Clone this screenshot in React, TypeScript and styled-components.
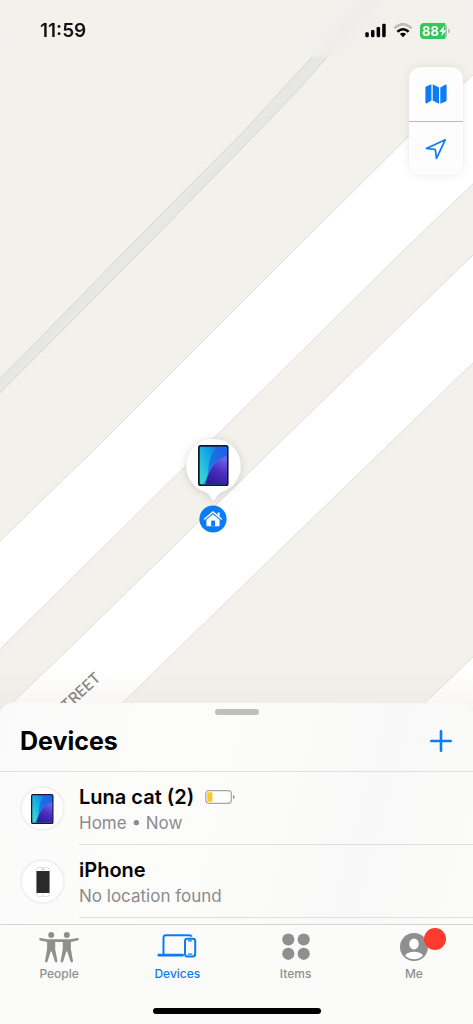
import React from "react";
import styled, { createGlobalStyle } from "styled-components";

const blue = "#0a7cf6";
const grey = "#8f8f90";

const GlobalStyle = createGlobalStyle`
  * { box-sizing: border-box; }
  body { margin: 0; background: #f2f1ec; font-family: Inter, "Liberation Sans", sans-serif; }
  button { font: inherit; color: inherit; background: none; border: 0; padding: 0; cursor: pointer; }
  svg { display: block; }
`;

const Screen = styled.div`
  min-height: 100vh;
  display: flex;
  flex-direction: column;
`;

const MapArea = styled.main`
  position: relative;
  flex: 1;
  min-height: 400px;
  overflow: hidden;
  background: #f2f1ec;
`;

const MapDrawing = styled.svg`
  position: absolute;
  inset: 0;
  width: 100%;
  height: 100%;
`;

const StatusBar = styled.header`
  position: relative;
  display: flex;
  align-items: center;
  justify-content: space-between;
  height: 57px;
  padding: 4px 23px 0 40px;
  background: rgba(242, 241, 236, 0.55);
  backdrop-filter: blur(10px);
`;

const Time = styled.time`
  font-size: 19px;
  font-weight: 600;
  color: #111;
`;

const StatusIcons = styled.div`
  display: flex;
  align-items: center;
  gap: 7px;
`;

const Controls = styled.div`
  position: relative;
  display: flex;
  flex-direction: column;
  width: 54px;
  margin: 10px 10px 0 auto;
  border-radius: 12px;
  background: #fdfdfd;
  box-shadow: 0 0 8px rgba(0, 0, 0, 0.09);
`;

const ControlButton = styled.button`
  display: grid;
  place-items: center;
  height: 54px;
  & + & { border-top: 1px solid #b9b9b9; }
`;

const Marker = styled.div`
  position: absolute;
  top: 65%;
  left: 45%;
  transform: translate(-50%, -27px);
`;

const HomePin = styled.div`
  position: absolute;
  top: 65%;
  left: 45%;
  transform: translate(-50%, 40px);
`;

const Sheet = styled.section`
  position: relative;
  margin-top: -12px;
  border-radius: 12px 12px 0 0;
  background: linear-gradient(105deg, #fafafa 0%, #fcfcfb 35%, #fbfbfa 55%, #f8f8f8 75%, #fbfbfa 100%);
`;

const Handle = styled.div`
  width: 44px;
  height: 6px;
  margin: 0 auto;
  border-radius: 3px;
  background: #bfbfbf;
`;

const SheetTop = styled.div`
  padding-top: 6px;
  height: 69px;
  border-bottom: 1px solid #e1e1e1;
`;

const SheetHeader = styled.div`
  display: flex;
  align-items: center;
  justify-content: space-between;
  height: 52px;
  padding: 0 21px 0 20px;
`;

const Title = styled.h1`
  margin: 0;
  font-size: 25px;
  line-height: 32px;
  font-weight: 700;
  color: #000;
`;

const DeviceList = styled.ul`
  list-style: none;
  margin: 0;
  padding: 0 0 6px 20px;
`;

const DeviceRow = styled.li`
  display: flex;
  align-items: center;
  gap: 14px;
`;

const Avatar = styled.div`
  display: grid;
  place-items: center;
  flex: none;
  width: 45px;
  height: 45px;
  border: 2px solid #f1f1f3;
  border-radius: 50%;
  background: #fff;
`;

const DeviceText = styled.div`
  flex: 1;
  height: 73px;
  padding-top: 12px;
  border-bottom: 1px solid #dfdfdf;
`;

const DeviceName = styled.h2`
  display: flex;
  align-items: center;
  gap: 11px;
  margin: 0;
  font-size: 20px;
  line-height: 26px;
  font-weight: 600;
  color: #050505;
`;

const DeviceStatus = styled.p`
  margin: 0;
  font-size: 17px;
  line-height: 26px;
  color: #8b8b8e;
`;

const TabBar = styled.nav`
  position: relative;
  height: 100px;
  border-top: 1px solid #d5d5d5;
  background: #fbfbfa;
  display: flex;
  flex-direction: column;
  justify-content: space-between;
  align-items: center;
  padding-bottom: 10px;
`;

const Tabs = styled.div`
  display: grid;
  grid-template-columns: repeat(4, 1fr);
  width: 100%;
`;

const Tab = styled.button<{ $active?: boolean }>`
  display: flex;
  flex-direction: column;
  align-items: center;
  padding-top: 4px;
  font-size: 12px;
  line-height: 18px;
  font-weight: 500;
  color: ${(p) => (p.$active ? blue : grey)};
`;

const TabIcon = styled.span`
  position: relative;
  display: grid;
  place-items: center;
  height: 36px;
`;

const Badge = styled.span`
  position: absolute;
  top: -1px;
  right: -18px;
  width: 22px;
  height: 22px;
  border-radius: 50%;
  background: #ff3b30;
`;

const HomeIndicator = styled.div`
  width: 168px;
  height: 6px;
  border-radius: 3px;
  background: #000;
`;

function Streets() {
  return (
    <MapDrawing viewBox="0 0 473 715" preserveAspectRatio="xMidYMid slice" aria-hidden="true">
      <defs>
        <linearGradient id="shade" x1="0" y1="0" x2="0" y2="1">
          <stop offset="0" stopColor="#eadfd2" stopOpacity="0" />
          <stop offset="1" stopColor="#eadfd2" stopOpacity="0.35" />
        </linearGradient>
      </defs>
      <rect width="473" height="715" fill="#f2f1ec" />
      <path d="M-4 383 L126 250 L245 130 L312 57 L372 -8 L390 -8 L327 57 L300 88 L252 138 L142 250 L-4 397Z" fill="#e7e8e3" stroke="#d6d6d2" />
      <g fill="#fff" stroke="#dedede">
        <path d="M-4 545 L94 450 L294 250 L408 137 L477 71 V180 L404 250 L215 437 L-4 653Z" />
        <path d="M-4 718 L12 703 L78 640 L272 450 L477 251 V359 L383 450 L187 640 L110 715Z" />
        <path d="M413 715 L425 703 L477 653 V715Z" />
      </g>
      <rect y="670" width="473" height="45" fill="url(#shade)" />
      <text transform="translate(60 718) rotate(-43)" fontFamily="Inter, sans-serif" fontSize="15" fontWeight="500" fill="#858585">
        STREET
      </text>
    </MapDrawing>
  );
}

function Tablet({ size, id }: { size: number; id: string }) {
  return (
    <svg width={size * 0.75} height={size} viewBox="0 0 30 40" aria-hidden="true">
      <defs>
        <linearGradient id={`${id}a`} x1="0" y1="0.7" x2="1" y2="0">
          <stop offset="0" stopColor="#37d3d4" />
          <stop offset="0.45" stopColor="#0fa6e6" />
          <stop offset="1" stopColor="#2346d8" />
        </linearGradient>
        <linearGradient id={`${id}b`} x1="0.7" y1="0" x2="0.3" y2="1">
          <stop offset="0" stopColor="#6a68ea" />
          <stop offset="0.5" stopColor="#4c2cc0" />
          <stop offset="1" stopColor="#2c1c96" />
        </linearGradient>
        <linearGradient id={`${id}c`} x1="0.8" y1="0" x2="0" y2="1">
          <stop offset="0" stopColor="#1d62e6" />
          <stop offset="1" stopColor="#1787e4" />
        </linearGradient>
      </defs>
      <rect width="30" height="40" rx="2.5" fill="#15182b" />
      <rect x="1.7" y="1.7" width="26.6" height="36.6" rx="1" fill={`url(#${id}a)`} />
      <path d="M10 25 C11 14 13 6 20 1.7 H27.3 Q28.3 1.7 28.3 2.7 V11 C19 14 11 20 7 38.3 H5 C8 34 9.5 30 10 25Z" fill={`url(#${id}c)`} />
      <path d="M28.3 10.5 C18 14 11 22 7 38.3 H27.3 Q28.3 38.3 28.3 37.3Z" fill={`url(#${id}b)`} />
    </svg>
  );
}

function Phone() {
  return (
    <svg width="14" height="30" viewBox="0 0 14 30" aria-hidden="true">
      <rect x="0.5" y="0.5" width="13" height="29" rx="2.5" fill="#fff" stroke="#e2e2e2" />
      <rect x="0.5" y="4" width="13" height="22" fill="#292a29" />
      <path d="M5 2.2h4" stroke="#aaa" strokeWidth="0.8" />
      <circle cx="7" cy="27.8" r="0.9" fill="#ddd" />
    </svg>
  );
}

function LowBattery() {
  return (
    <svg width="30" height="14" viewBox="0 0 30 14" role="img" aria-label="Low battery">
      <rect x="0.7" y="0.7" width="25.6" height="12.6" rx="3" fill="#fdfdfd" stroke="#a6a6a6" strokeWidth="1.2" />
      <rect x="2.2" y="2.2" width="5.2" height="9.6" rx="1.4" fill="#fac91f" />
      <path d="M28 5 Q29.6 5.4 29.6 7 Q29.6 8.6 28 9Z" fill="#8d8d8d" />
    </svg>
  );
}

function PeopleIcon() {
  return (
    <svg width="40" height="32" viewBox="0 0 40 32" fill="currentColor" aria-hidden="true">
      <circle cx="12.2" cy="3.9" r="3" />
      <circle cx="27.8" cy="3.9" r="3" />
      <path d="M1.6 7 L8.5 8.2 H31.5 L38.4 7 Q39.9 7 39.8 8.2 Q39.8 9.1 38.6 9.4 L31.9 10.9 V18.2 L34 30 Q34 31.4 32.8 31.4 Q31.8 31.4 31.4 30.3 L28.3 20.6 H27.3 L24.2 30.3 Q23.8 31.4 22.8 31.4 Q21.6 31.4 21.6 30 L23.8 18.2 V11 H16.2 V18.2 L18.4 30 Q18.4 31.4 17.2 31.4 Q16.2 31.4 15.8 30.3 L12.7 20.6 H11.7 L8.6 30.3 Q8.2 31.4 7.2 31.4 Q6 31.4 6 30 L8.1 18.2 V10.9 L1.4 9.4 Q.2 9.1 .2 8.2 Q.1 7 1.6 7Z" />
    </svg>
  );
}

function DevicesIcon() {
  return (
    <svg width="40" height="26" viewBox="0 0 40 26" fill="none" stroke="currentColor" strokeWidth="2" aria-hidden="true">
      <path d="M6.5 20.5 V3.6 Q6.5 1.2 8.9 1.2 H32 Q34 1.2 34.8 2.6" />
      <path d="M1.9 21.2 H25.6" strokeWidth="2.8" strokeLinecap="round" />
      <rect x="28" y="4.8" width="10.2" height="17.6" rx="2.4" />
      <path d="M31 6.8h4.2M30.8 20.2h4.6" strokeWidth="1.3" />
    </svg>
  );
}

function ItemsIcon() {
  return (
    <svg width="28" height="28" viewBox="0 0 28 28" fill="currentColor" aria-hidden="true">
      <circle cx="6.3" cy="6.5" r="6.1" />
      <circle cx="21.7" cy="6.5" r="6.1" />
      <circle cx="6.3" cy="20.8" r="6.1" />
      <circle cx="21.7" cy="20.8" r="6.1" />
    </svg>
  );
}

function MeIcon() {
  return (
    <svg width="28" height="28" viewBox="0 0 28 28" aria-hidden="true">
      <circle cx="14" cy="14" r="14" fill="currentColor" />
      <ellipse cx="14" cy="11" rx="4.8" ry="5.4" fill="#fff" />
      <path d="M5 22.4 C6.6 20 10 18.8 14 18.8 S21.4 20 23 22.4 C21 24.8 17.6 26.2 14 26.2 S7 24.8 5 22.4Z" fill="#fff" />
    </svg>
  );
}

export default function App() {
  return (
    <Screen>
      <GlobalStyle />
      <MapArea>
        <Streets />
        <StatusBar>
          <Time>11:59</Time>
          <StatusIcons>
            <svg width="21" height="15" viewBox="0 0 21 15" fill="#000" aria-hidden="true">
              <rect x="0.3" y="9.3" width="3.5" height="4.9" rx="1.1" />
              <rect x="6" y="7" width="3.5" height="7.2" rx="1.1" />
              <rect x="11.6" y="4" width="3.5" height="10.2" rx="1.1" />
              <rect x="17.2" y="0.8" width="3.5" height="13.4" rx="1.1" />
            </svg>
            <svg width="20" height="15" viewBox="0 0 20 15" fill="none" strokeWidth="2.5" aria-hidden="true">
              <path d="M1.4 5.2 Q10 -2.6 18.6 5.2" stroke="#bdbdbb" />
              <path d="M4.4 8.7 Q10 3.8 15.6 8.7" stroke="#000" />
              <path d="M6.9 11 Q10 8.6 13.1 11 L10 14.2Z" fill="#000" />
            </svg>
            <svg width="30" height="16" viewBox="0 0 30 16" role="img" aria-label="Battery 88 percent, charging">
              <rect width="27" height="16" rx="4.5" fill="#a9b9ab" />
              <path d="M4.5 0 H25 V16 H4.5 Q0 16 0 11.5 V4.5 Q0 0 4.5 0Z" fill="#36c65b" />
              <path d="M28.3 5.5 Q29.8 6.2 29.8 8 Q29.8 9.8 28.3 10.5Z" fill="#a5a5a3" />
              <text x="2" y="12.5" fontFamily="Inter, sans-serif" fontSize="13" fontWeight="700" fill="#fff">88</text>
              <path d="M24.4 2.6 L19.4 8.8 H22.4 L21.3 13.6 L26.4 7.2 H23.4Z" fill="#fff" />
            </svg>
          </StatusIcons>
        </StatusBar>
        <Controls>
          <ControlButton aria-label="Map type">
            <svg width="22" height="20" viewBox="0 0 22 20" fill={blue} aria-hidden="true">
              <path d="M0.4 3.6 Q.4 3 1 2.6 L6.4 0.2 V16.6 L1.4 19.4 Q.4 19.6 .4 18.6Z" />
              <path d="M7.7 .2 L14 3.4 V19.8 L7.7 16.6Z" />
              <path d="M15.3 3.4 L20.6 .6 Q21.6 .3 21.6 1.4 V16.2 Q21.6 17 21 17.3 L15.3 19.8Z" />
            </svg>
          </ControlButton>
          <ControlButton aria-label="Show my location">
            <svg width="22" height="22" viewBox="0 0 22 22" fill="none" stroke={blue} strokeWidth="1.7" strokeLinejoin="round" aria-hidden="true">
              <path d="M20.2 1.8 L1.4 10.4 L10.3 11.5 L11.5 20.4Z" />
            </svg>
          </ControlButton>
        </Controls>
        <Marker>
          <svg width="76" height="84" viewBox="0 0 76 84" overflow="visible" role="img" aria-label="Luna cat (2) at Home">
            <defs>
              <filter id="soft" x="-20%" y="-20%" width="140%" height="140%">
                <feDropShadow dx="0" dy="1" stdDeviation="4" floodColor="#000" floodOpacity="0.16" />
              </filter>
            </defs>
            <path filter="url(#soft)" d="M38.5 1 A27 27 0 0 1 47.5 53.5 C43.5 55 41.5 58 40 61 Q38.5 63.4 37 61 C35.5 58 33.5 55 29.5 53.5 A27 27 0 0 1 38.5 1Z" fill="#fff" />
            <g transform="translate(23 7)">
              <Tablet size={41} id="pin" />
            </g>
          </svg>
        </Marker>
        <HomePin role="img" aria-label="Home">
          <svg width="28" height="28" viewBox="0 0 28 28" aria-hidden="true">
            <circle cx="14" cy="14" r="13.6" fill={blue} />
            <path d="M5.6 14 L14 7 L22.4 14" fill="none" stroke="#fff" strokeWidth="1.5" strokeLinecap="round" />
            <path d="M18.6 7.6h2v4l-2-1.6Z" fill="#fff" />
            <path d="M14 9.2 L20.6 14.8 V20.2 Q20.6 21.2 19.6 21.2 H8.4 Q7.4 21.2 7.4 20.2 V14.8Z" fill="#fff" />
            <rect x="12.2" y="15.6" width="3.8" height="5.6" fill={blue} />
          </svg>
        </HomePin>
      </MapArea>
      <Sheet>
        <SheetTop>
          <Handle />
          <SheetHeader>
            <Title>Devices</Title>
            <button aria-label="Add device">
              <svg width="22" height="22" viewBox="0 0 22 22" stroke={blue} strokeWidth="2.6" strokeLinecap="round" aria-hidden="true">
                <path d="M11 1.3V20.7M1.3 11H20.7" />
              </svg>
            </button>
          </SheetHeader>
        </SheetTop>
        <DeviceList>
          <DeviceRow>
            <Avatar><Tablet size={30} id="row" /></Avatar>
            <DeviceText>
              <DeviceName>Luna cat (2) <LowBattery /></DeviceName>
              <DeviceStatus>Home • Now</DeviceStatus>
            </DeviceText>
          </DeviceRow>
          <DeviceRow>
            <Avatar><Phone /></Avatar>
            <DeviceText>
              <DeviceName>iPhone</DeviceName>
              <DeviceStatus>No location found</DeviceStatus>
            </DeviceText>
          </DeviceRow>
        </DeviceList>
      </Sheet>
      <TabBar>
        <Tabs>
          <Tab><TabIcon><PeopleIcon /></TabIcon>People</Tab>
          <Tab $active aria-current="page"><TabIcon><DevicesIcon /></TabIcon>Devices</Tab>
          <Tab><TabIcon><ItemsIcon /></TabIcon>Items</Tab>
          <Tab><TabIcon><MeIcon /><Badge /></TabIcon>Me</Tab>
        </Tabs>
        <HomeIndicator />
      </TabBar>
    </Screen>
  );
}
